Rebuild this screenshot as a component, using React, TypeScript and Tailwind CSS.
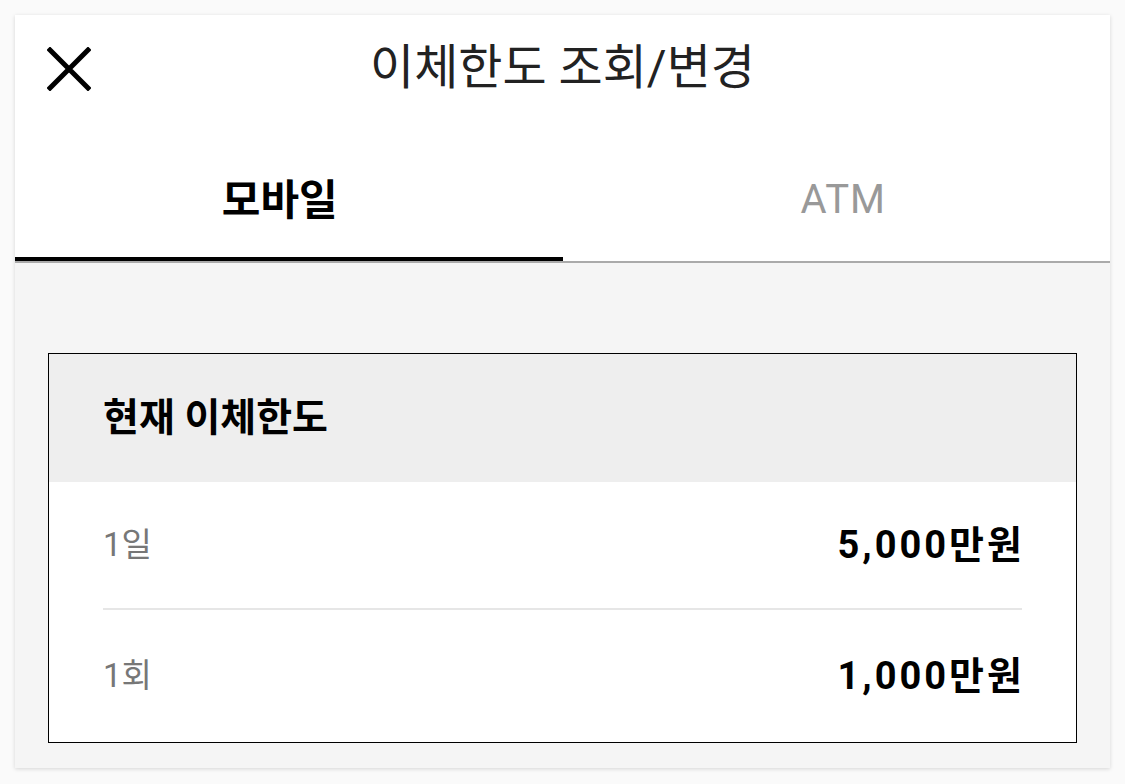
import React, { useState } from 'react';

const FONT = "font-['Roboto','Noto_Sans_CJK_KR',sans-serif]";

const limits = [
    { label: '1일', value: '5,000만원' },
    { label: '1회', value: '1,000만원' },
];

const CloseIcon = () => (
    <svg width="44" height="44" viewBox="0 0 44 44" fill="none">
        <path d="M3 3L41 41M41 3L3 41" stroke="#000" strokeWidth="5" strokeLinecap="square" />
    </svg>
);

const App = () => {
    const [tab, setTab] = useState<'mobile' | 'atm'>('mobile');

    return (
        <div className={`min-h-[784px] bg-[#fafafa] p-[15px] ${FONT}`}>
            <div className="flex h-[753px] flex-col bg-white shadow-[0_1px_4px_rgba(0,0,0,0.15)]">
                {/* Header */}
                <div className="grid h-[106px] shrink-0 grid-cols-[1fr_auto_1fr] items-center">
                    <div className="pl-[32px] pt-[2px]">
                        <button className="flex items-center justify-center">
                            <CloseIcon />
                        </button>
                    </div>
                    <h1 className="text-[48px] font-normal text-[#222] leading-none">이체한도 조회/변경</h1>
                    <div />
                </div>

                {/* Tabs */}
                <div className="flex shrink-0 border-b-2 border-[#aaaaaa]">
                    <button
                        onClick={() => setTab('mobile')}
                        className={`flex h-[140px] w-1/2 items-center justify-center pt-[22px] text-[42px] border-b-4 ${
                            tab === 'mobile' ? 'border-black font-bold text-black' : 'border-transparent text-[#999]'
                        }`}
                    >
                        <span className="pr-[18px]">모바일</span>
                    </button>
                    <button
                        onClick={() => setTab('atm')}
                        className={`flex h-[140px] w-1/2 items-center justify-center pt-[22px] text-[40px] tracking-[1px] border-b-4 ${
                            tab === 'atm' ? 'border-black font-bold text-black' : 'border-transparent text-[#999]'
                        }`}
                    >
                        <span className="pl-[14px]">ATM</span>
                    </button>
                </div>

                {/* Content */}
                <div className="flex flex-1 flex-col bg-[#f5f5f5] px-[33px] pt-[90px] pb-[25px]">
                    <div className="flex flex-1 flex-col border border-black bg-white">
                        <div className="flex h-[128px] items-center bg-[#eeeeee] px-[54px]">
                            <h2 className="text-[39px] font-bold text-black">현재 이체한도</h2>
                        </div>
                        <div className="flex flex-1 flex-col px-[54px]">
                            {limits.map((row, i) => (
                                <div
                                    key={row.label}
                                    className={`flex items-center justify-between ${
                                        i === 0 ? 'h-[128px] border-b-2 border-[#e6e6e6]' : 'flex-1'
                                    }`}
                                >
                                    <span className="text-[33px] text-[#777]">{row.label}</span>
                                    <span className="mr-[-3px] text-[38px] font-bold text-black tracking-[3px]">
                                        {row.value}
                                    </span>
                                </div>
                            ))}
                        </div>
                    </div>
                </div>
            </div>
        </div>
    );
};

export default App;
